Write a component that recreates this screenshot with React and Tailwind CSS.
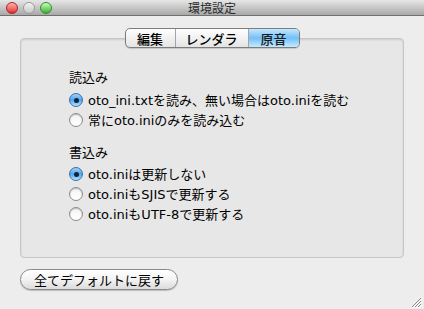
import React from "react";

const font = { fontFamily: '"Noto Sans CJK JP", "Liberation Sans", sans-serif' };
const labelFont = { fontFamily: '"DejaVu Sans", "Noto Sans CJK JP", sans-serif' };

const Light = ({ from, to, ring }) => (
  <span
    className={`block h-[12px] w-[12px] rounded-full border ${ring} bg-gradient-to-b ${from} ${to}`}
  />
);

const Radio = ({ checked, label }) => (
  <label className="flex h-[20px] items-center gap-[5px]">
    {checked ? (
      <span className="flex h-[14px] w-[14px] items-center justify-center rounded-full border border-[#3b6ea8] bg-gradient-to-b from-[#9fd1f7] via-[#4aa3ef] to-[#b7e2ff]">
        <span className="block h-[5px] w-[5px] rounded-full bg-[#10233a]" />
      </span>
    ) : (
      <span className="block h-[14px] w-[14px] rounded-full border border-[#8c8c8c] bg-gradient-to-b from-[#f4f4f4] to-[#ffffff] shadow-[inset_0_1px_1px_rgba(0,0,0,0.25)]" />
    )}
    <span className="text-[13px] leading-none text-black" style={labelFont}>
      {label}
    </span>
  </label>
);

export default function App() {
  const tabs = [
    { label: "編集", w: "w-[49px]" },
    { label: "レンダラ", w: "w-[73px]" },
    { label: "原音", w: "w-[51px]", active: true },
  ];

  return (
    <div className="flex h-[309px] w-[424px] flex-col overflow-hidden bg-[#ededed]" style={font}>
      {/* title bar */}
      <div className="relative flex h-[16px] shrink-0 items-center border-b border-[#6f6f6f] bg-gradient-to-b from-[#e6e6e6] to-[#a9a9a9]">
        <div className="flex items-center gap-[5px] pl-[6px]">
          <Light from="from-[#ffb0b0]" to="to-[#e0202a]" ring="border-[#a5262a]" />
          <Light from="from-[#f2f2f2]" to="to-[#c8c8c8]" ring="border-[#9a9a9a]" />
          <Light from="from-[#c8ffb6]" to="to-[#2bb12b]" ring="border-[#3a8a33]" />
        </div>
        <span className="absolute left-1/2 top-[1px] -translate-x-1/2 text-[12px] leading-[14px] text-[#2b2b2b]">
          環境設定
        </span>
      </div>

      {/* content */}
      <div className="flex flex-1 flex-col px-[20px] pt-[12px]">
        <div className="relative z-10 flex justify-center">
          <div className="flex h-[20px] overflow-hidden rounded-[5px] border border-[#7d7d7d] bg-gradient-to-b from-[#ffffff] to-[#e4e4e4] shadow-[0_1px_1px_rgba(0,0,0,0.15)]">
            {tabs.map((t, i) => (
              <div
                key={i}
                className={`${t.w} flex items-center justify-center text-[13px] font-medium leading-none ${
                  i > 0 ? "border-l border-[#a5a5a5]" : ""
                } ${
                  t.active
                    ? "bg-gradient-to-b from-[#c6e7ff] via-[#72c0f6] to-[#c3eaff] text-[#1a1a1a]"
                    : "text-black"
                }`}
              >
                {t.label}
              </div>
            ))}
          </div>
        </div>

        <div className="-mt-[10px] flex h-[220px] flex-col rounded-[4px] border border-[#c6c6c6] bg-[#e7e7e7] pl-[48px] pt-[29px] shadow-[inset_0_1px_2px_rgba(0,0,0,0.12)]">
          <div className="text-[13px] leading-[18px] text-black">読込み</div>
          <div className="mt-[4px] flex flex-col">
            <Radio checked label="oto_ini.txtを読み、無い場合はoto.iniを読む" />
            <Radio label="常にoto.iniのみを読み込む" />
          </div>
          <div className="mt-[13px] text-[13px] leading-[18px] text-black">書込み</div>
          <div className="mt-[3px] flex flex-col">
            <Radio checked label="oto.iniは更新しない" />
            <Radio label="oto.iniもSJISで更新する" />
            <Radio label="oto.iniもUTF-8で更新する" />
          </div>
        </div>

        <div className="mt-[11px] flex items-end justify-between">
          <button className="flex h-[21px] w-[158px] items-center justify-center rounded-full border border-[#8a8a8a] bg-gradient-to-b from-[#ffffff] via-[#f3f3f3] to-[#dcdcdc] text-[13px] leading-none text-black shadow-[0_1px_1px_rgba(0,0,0,0.2)]">
            全てデフォルトに戻す
          </button>
          <svg width="12" height="12" viewBox="0 0 12 12" className="-mr-[18px] mb-[-18px]">
            <path d="M11 2 L2 11 M11 5 L5 11 M11 8 L8 11" stroke="#8a8a8a" strokeWidth="1" />
            <path d="M12 3 L3 12 M12 6 L6 12 M12 9 L9 12" stroke="#ffffff" strokeWidth="1" />
          </svg>
        </div>
      </div>
    </div>
  );
}
